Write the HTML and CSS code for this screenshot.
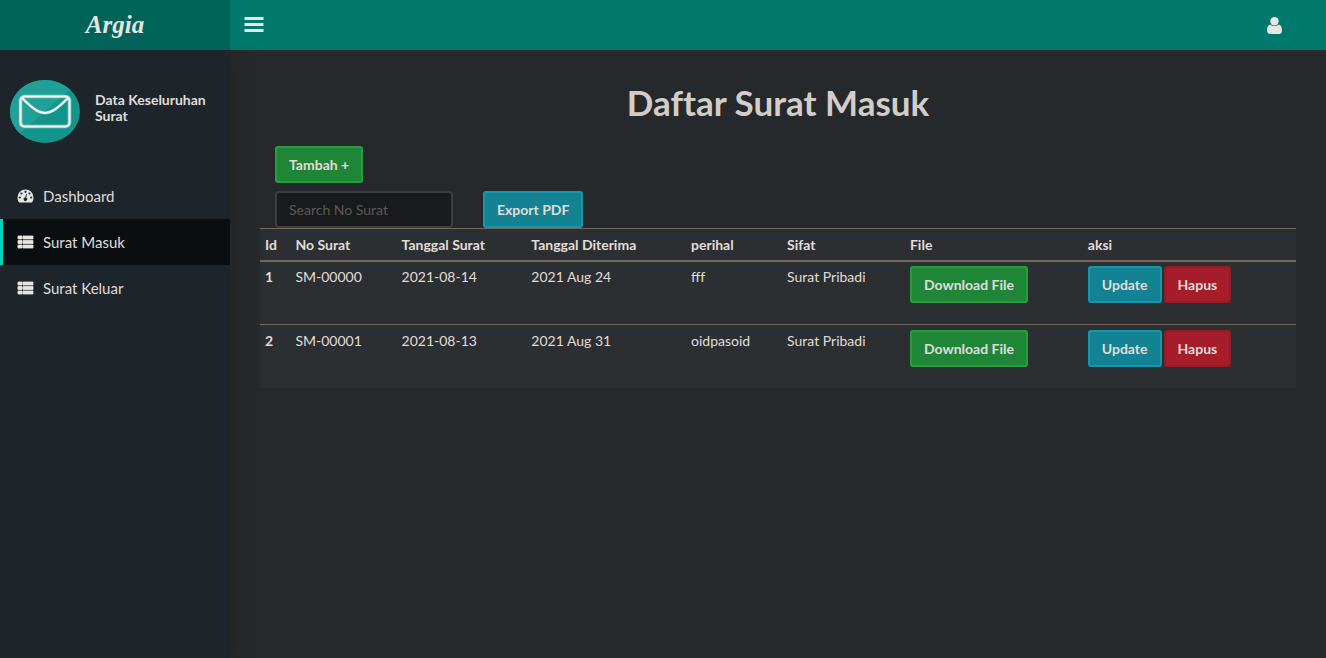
FILE: index.html
```html
<!DOCTYPE html>
<html lang="id">
<head>
<meta charset="utf-8">
<meta name="viewport" content="width=device-width, initial-scale=1">
<title>Daftar Surat Masuk</title>
<link rel="stylesheet" href="styles.css">
</head>
<body>
<svg class="icon-defs">
  <symbol id="icon-list" viewBox="0 0 17 14">
    <path d="M1 1h4v3H1zM6 1h10v3H6zM1 5.500h4v3H1zM6 5.500h10v3H6zM1 10h4v3H1zM6 10h10v3H6z" stroke="#e8e6e3" stroke-width=".8" stroke-linejoin="round"/>
  </symbol>
</svg>
<header class="topbar">
  <a class="brand" href="#">Argia</a>
  <button class="icon-button" type="button" aria-label="Menu">
    <svg class="bars" viewBox="0 0 19 15"><path d="M0 0h19v3H0zM0 6h19v3H0zM0 12h19v3H0z"/></svg>
  </button>
  <button class="icon-button account" type="button" aria-label="Akun">
    <svg class="user" viewBox="0 0 15 17"><path d="M3.200 7.500C1 8 0 10.400 0 13c0 2.500 1.200 4 3 4h9c1.800 0 3-1.500 3-4 0-2.600-1-5-3.200-5.500C10.700 8.500 9.200 9 7.500 9s-3.200-.5-4.300-1.500z"/><circle cx="7.500" cy="4.200" r="4.200"/></svg>
  </button>
</header>
<div class="layout">
  <aside class="sidebar">
    <div class="profile">
      <svg class="avatar" viewBox="0 0 70 63">
        <ellipse cx="35" cy="31.500" rx="35" ry="31.500" fill="#14958c"/>
        <path d="M9.700 53.300A35 31.500 0 0 1 60.300 9.700z" fill="#20a097"/>
        <rect x="10.500" y="16.500" width="49" height="30" rx="4" fill="none" stroke="#79c9c2" stroke-width="3.600"/>
        <path d="M12 18C25 31 30 33 35 33s10-2 23-15" fill="none" stroke="#79c9c2" stroke-width="3"/>
        <rect x="10.500" y="16.500" width="49" height="30" rx="4" fill="none" stroke="#f2f5f3" stroke-width="2"/>
        <path d="M12 18C25 31 30 33 35 33s10-2 23-15" fill="none" stroke="#f2f5f3" stroke-width="2"/>
      </svg>
      <p class="profile-name">Data Keseluruhan Surat</p>
    </div>
    <nav class="menu">
      <a class="menu-item" href="#">
        <svg class="menu-icon" viewBox="0.500 2 17 14"><path fill-rule="evenodd" d="M9 2.500a8 8 0 0 0-8 8c0 1.800.4 3.300 1.200 4.500.2.300.4.500.8.500h12c.4 0 .6-.2.800-.5.800-1.200 1.200-2.700 1.200-4.500a8 8 0 0 0-8-8zM9 3.700a1.100 1.100 0 1 1 0 2.200 1.100 1.100 0 0 1 0-2.200zM5 5.400a1.100 1.100 0 1 1 0 2.200 1.100 1.100 0 0 1 0-2.200zM13 5.400a1.100 1.100 0 1 1 0 2.200 1.100 1.100 0 0 1 0-2.200zM3.300 9.400a1.100 1.100 0 1 1 0 2.200 1.100 1.100 0 0 1 0-2.200zM14.700 9.400a1.100 1.100 0 1 1 0 2.200 1.100 1.100 0 0 1 0-2.200zM9.700 7l.8.200-.8 3.600a1.700 1.700 0 1 1-1-.2z"/></svg>
        <span>Dashboard</span>
      </a>
      <a class="menu-item active" href="#" aria-current="page">
        <svg class="menu-icon"><use href="#icon-list"/></svg>
        <span>Surat Masuk</span>
      </a>
      <a class="menu-item" href="#">
        <svg class="menu-icon"><use href="#icon-list"/></svg>
        <span>Surat Keluar</span>
      </a>
    </nav>
  </aside>
  <main class="content">
    <h1 class="title">Daftar Surat Masuk</h1>
    <div class="toolbar">
      <button class="btn btn-success" type="button">Tambah +</button>
      <form class="search">
        <input class="search-input" type="text" placeholder="Search No Surat" aria-label="Search No Surat">
        <button class="btn btn-info" type="button">Export PDF</button>
      </form>
    </div>
    <table class="table">
      <thead>
        <tr><th>Id</th><th>No Surat</th><th>Tanggal Surat</th><th>Tanggal Diterima</th><th>perihal</th><th>Sifat</th><th>File</th><th>aksi</th></tr>
      </thead>
      <tbody>
        <tr>
          <th>1</th><td>SM-00000</td><td>2021-08-14</td><td>2021 Aug 24</td><td>fff</td><td>Surat Pribadi</td>
          <td><a class="btn btn-success" href="#">Download File</a></td>
          <td><div class="actions"><button class="btn btn-info" type="button">Update</button><button class="btn btn-danger" type="button">Hapus</button></div></td>
        </tr>
        <tr>
          <th>2</th><td>SM-00001</td><td>2021-08-13</td><td>2021 Aug 31</td><td>oidpasoid</td><td>Surat Pribadi</td>
          <td><a class="btn btn-success" href="#">Download File</a></td>
          <td><div class="actions"><button class="btn btn-info" type="button">Update</button><button class="btn btn-danger" type="button">Hapus</button></div></td>
        </tr>
      </tbody>
    </table>
  </main>
</div>
</body>
</html>
```
FILE: styles.css
```css
* { box-sizing: border-box; }

body {
  display: flex;
  flex-direction: column;
  min-height: 100vh;
  margin: 0;
  background: #26292b;
  color: #e0ddd8;
  font: 14px/21px Lato, "Liberation Sans", sans-serif;
}

a { color: inherit; text-decoration: none; }

.icon-defs { display: none; }

.topbar {
  position: relative;
  z-index: 1;
  display: flex;
  align-items: center;
  height: 50px;
  padding-right: 30px;
  background: #00796d;
}

.brand {
  width: 230px;
  background: #00635a;
  color: #e6e4e0;
  font: italic bold 25px/50px "Liberation Serif", serif;
  text-align: center;
}

.icon-button {
  display: flex;
  align-items: center;
  height: 50px;
  padding: 0 14px 2px;
  border: 0;
  background: none;
  fill: #e8e6e3;
}

.account { margin-left: auto; padding-bottom: 0; }
.bars { width: 20px; height: 15px; }
.user { width: 15px; height: 17px; }

.layout { display: flex; flex: 1; }

.sidebar {
  flex: none;
  width: 230px;
  padding-top: 30px;
  background: #1d242a;
  box-shadow: 0 8px 17px rgba(36, 36, 33, 0.9);
}

.profile {
  display: flex;
  align-items: center;
  gap: 15px;
  margin-bottom: 30px;
  padding: 0 10px;
}

.avatar { flex: none; width: 70px; height: 63px; }

.profile-name {
  margin: 0 0 8px;
  font-weight: bold;
  line-height: 16px;
}

.menu-item {
  display: flex;
  align-items: center;
  gap: 9px;
  height: 46px;
  padding: 0 14px;
  border-left: 3px solid transparent;
  font-size: 15px;
}

.menu-item.active { border-left-color: #00d4bd; background: #0b0e10; }
.menu-icon { width: 17px; height: 14px; fill: #e8e6e3; }

.content { flex: 1; min-width: 0; padding: 30px; }

.title {
  margin: 0 0 22px;
  color: #d2cec7;
  font-size: 35px;
  line-height: 44px;
  font-variant-ligatures: none;
  text-align: center;
}

.toolbar {
  display: flex;
  flex-direction: column;
  align-items: flex-start;
  gap: 8px;
  padding: 0 15px;
}

.search { display: flex; gap: 30px; }

.search-input {
  width: 178px;
  padding: 6px 12px;
  border: 2px solid #3b3e40;
  border-radius: 4px;
  background: #191a1c;
  color: inherit;
  font: inherit;
}

.search-input::placeholder { color: #5d5a54; opacity: 1; }

.btn {
  display: inline-block;
  padding: 6px 12px;
  border: 2px solid;
  border-radius: 3px;
  color: #e0ddd8;
  font: bold 14px/21px Lato, "Liberation Sans", sans-serif;
  white-space: nowrap;
}

.btn-success { border-color: #259f3e; background: #208637; }
.btn-info { border-color: #1498ad; background: #138293; }
.btn-danger { border-color: #931b26; background: #a51d2a; }

.table {
  width: 100%;
  border-collapse: collapse;
  background: #2c2f32;
}

.table th,
.table td {
  padding: 5px;
  border-top: 1px solid #736859;
  text-align: left;
  vertical-align: top;
}

.table thead th { border-bottom: 2px solid #736859; }
.table tbody tr:first-child > * { padding-top: 4px; }
.table td .btn { margin-bottom: 16px; }
.actions { display: flex; gap: 2px; }
.table .actions .btn { margin-bottom: 0; }
```
